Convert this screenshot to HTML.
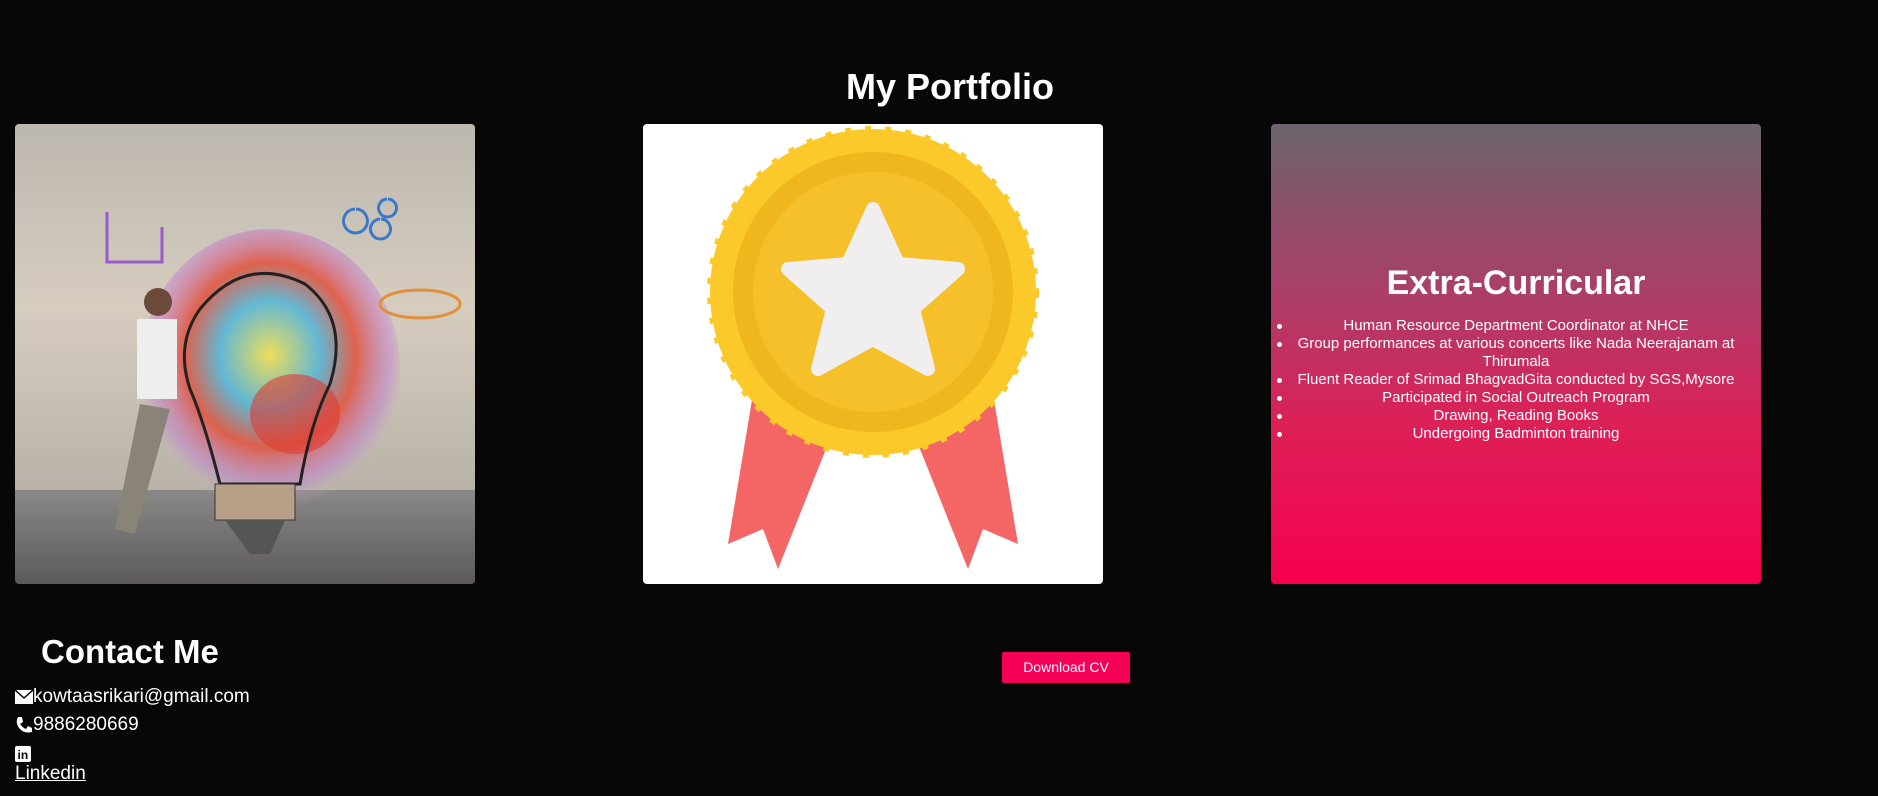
<!DOCTYPE html>
<html><head><meta charset="utf-8"><style>
html,body{margin:0;padding:0;background:#070707;width:1878px;height:796px;overflow:hidden;font-family:"Liberation Sans",Arial,sans-serif;color:#fff}
h1{position:absolute;left:0;width:1900px;text-align:center;top:66px;margin:0;font-size:36px;font-weight:bold}
.card{position:absolute;top:124px;width:460px;height:460px;border-radius:4px;overflow:hidden}
#c1{left:15px}#c2{left:643px;background:#fff}
#c3{left:1271px;width:490px;background:linear-gradient(#6c646c 0%,#a8406a 35%,#dc2058 65%,#f7004e 100%)}
#c3 h2{position:absolute;top:140px;width:100%;text-align:center;margin:0;font-size:34px;font-weight:bold}
#c3 ul{position:absolute;top:193px;left:0;right:0;margin:0;padding:0 20px 0 20px;list-style:none;text-align:center;font-size:15px;line-height:18px}
#c3 li{position:relative}
#c3 li:before{content:"";position:absolute;left:-14px;top:7px;width:5px;height:5px;border-radius:50%;background:#fff}
.contact{position:absolute;left:41px;top:633px;font-size:33px;font-weight:bold;margin:0}
.line{position:absolute;left:15px;font-size:19px;display:flex;align-items:center}
.btn{position:absolute;left:1002px;top:652px;width:128px;height:31px;background:#f50057;color:#fff;font-size:14px;text-align:center;line-height:31px;border-radius:2px}
</style></head><body>
<h1>My Portfolio</h1>
<div class="card" id="c1"><svg width="460" height="460">
<defs><linearGradient id="w" x1="0" y1="0" x2="0" y2="1"><stop offset="0" stop-color="#bcb7b0"/><stop offset=".5" stop-color="#d6cdbf"/><stop offset="1" stop-color="#b8b2a8"/></linearGradient>
<linearGradient id="f" x1="0" y1="0" x2="0" y2="1"><stop offset="0" stop-color="#8b8987"/><stop offset="1" stop-color="#5b5a59"/></linearGradient>
<radialGradient id="b" cx=".5" cy=".45" r=".55"><stop offset="0" stop-color="#f3e24a"/><stop offset=".35" stop-color="#4fb5d8"/><stop offset=".6" stop-color="#e2503a"/><stop offset=".85" stop-color="#c07ad8" stop-opacity=".5"/><stop offset="1" stop-color="#d8c8b8" stop-opacity="0"/></radialGradient></defs>
<rect width="460" height="366" fill="url(#w)"/><rect y="366" width="460" height="94" fill="url(#f)"/>
<ellipse cx="255" cy="245" rx="130" ry="140" fill="url(#b)" opacity=".85"/>
<ellipse cx="280" cy="290" rx="45" ry="40" fill="#e03a30" opacity=".6"/>
<path d="M205 360 Q190 300 175 265 Q160 220 185 185 Q230 130 290 160 Q335 195 315 260 Q295 300 285 360 Z" fill="none" stroke="#222" stroke-width="3"/>
<rect x="200" y="360" width="80" height="36" fill="#b8a088" stroke="#333"/>
<path d="M210 396 L235 430 L255 430 L270 396Z" fill="#555"/>
<rect x="122" y="195" width="40" height="80" fill="#eee"/>
<circle cx="143" cy="178" r="14" fill="#6b4a3a"/>
<path d="M125 280 L100 405 L120 410 L155 285Z" fill="#8a8478"/>
<path d="M92 88 v50 h55 v-35" stroke="#9a5acc" fill="none" stroke-width="3"/>
<path d="M340 85 a12 12 0 1 0 1 0 M365 95 a10 10 0 1 0 1 0 M372 75 a9 9 0 1 0 1 0" stroke="#3a78c8" fill="none" stroke-width="3"/>
<ellipse cx="405" cy="180" rx="40" ry="14" stroke="#e0903a" fill="none" stroke-width="3"/>
</svg></div>
<div class="card" id="c2"><svg width="460" height="460">
<path d="M110 270 L85 420 L120 405 L135 445 L185 320Z" fill="#f46565"/>
<path d="M350 270 L375 420 L340 405 L325 445 L275 320Z" fill="#f46565"/>
<circle cx="230" cy="168" r="163" fill="#fbc92a" stroke="#fbc92a" stroke-width="6" stroke-dasharray="6 14"/>
<circle cx="230" cy="168" r="140" fill="#f0b61e"/>
<circle cx="230" cy="168" r="120" fill="#f6c02a"/>
<path d="M230 85 L255 140 L315 145 L270 185 L285 245 L230 215 L175 245 L190 185 L145 145 L205 140Z" fill="#f0eeee" stroke="#f0eeee" stroke-width="14" stroke-linejoin="round"/>
</svg></div>
<div class="card" id="c3"><h2>Extra-Curricular</h2><ul>
<li>Human Resource Department Coordinator at NHCE</li>
<li>Group performances at various concerts like Nada Neerajanam at Thirumala</li>
<li>Fluent Reader of Srimad BhagvadGita conducted by SGS,Mysore</li>
<li>Participated in Social Outreach Program</li>
<li>Drawing, Reading Books</li>
<li>Undergoing Badminton training</li></ul></div>
<h2 class="contact">Contact Me</h2>
<div class="line" style="top:686px"><svg width="18" height="14" viewBox="0 0 18 14"><rect width="18" height="14" fill="#fff"/><path d="M0 0 L9 8 L18 0" stroke="#070707" stroke-width="1.5" fill="none"/></svg>kowtaasrikari@gmail.com</div>
<div class="line" style="top:714px"><svg width="18" height="18" viewBox="0 0 18 18"><path d="M3 1 L7 1 L8 6 L5 8 Q8 12 11 13 L13 10 L17 12 L17 16 Q9 18 4 12 Q0 6 3 1Z" fill="#fff"/></svg>9886280669</div>
<div class="line" style="top:746px"><svg width="16" height="16"><rect width="16" height="16" rx="2" fill="#fff"/><text x="2.5" y="13" font-size="12" font-weight="bold" fill="#070707" font-family="Liberation Sans">in</text></svg></div>
<div class="line" style="top:763px;text-decoration:underline">Linkedin</div>
<div class="btn">Download CV</div>
</body></html>
